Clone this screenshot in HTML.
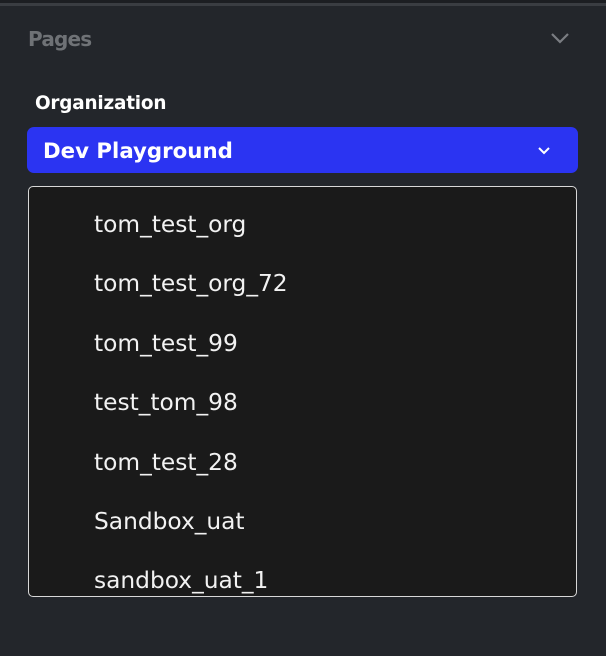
<!DOCTYPE html>
<html><head><style>
html,body{margin:0;padding:0;}
body{width:606px;height:656px;background:#23262b;position:relative;overflow:hidden;font-family:"DejaVu Sans","Liberation Sans",sans-serif;}
.topbar{position:absolute;left:0;top:0;width:606px;height:3px;background:#1c1e22;}
.topline{position:absolute;left:0;top:3px;width:606px;height:3px;background:#3a3d42;}
.pages{position:absolute;left:28px;top:27px;font-size:20px;font-weight:bold;color:#6f7276;letter-spacing:-0.8px;}
.org{position:absolute;left:35px;top:93px;font-size:18.4px;font-weight:bold;color:#fff;letter-spacing:-0.2px;}
.btn{position:absolute;left:27px;top:127px;width:551px;height:46px;background:#2b34f2;border-radius:7px;}
.btn span{position:absolute;left:16px;top:12px;font-size:21.3px;font-weight:bold;color:#fff;}
.list{position:absolute;left:28px;top:186px;width:547px;height:409px;background:#1a1a1a;border:1px solid #d8d8d8;border-radius:5px;overflow:hidden;}
.item{position:absolute;left:65px;font-size:23.3px;color:#f2f2f2;}
</style></head><body>
<div class="topbar"></div><div class="topline"></div>
<div class="pages">Pages</div>
<svg style="position:absolute;left:550px;top:31px" width="20" height="14"><path d="M2 3 L10 11 L18 3" fill="none" stroke="#7a7d82" stroke-width="2.2"/></svg>
<div class="org">Organization</div>
<div class="btn"><span>Dev Playground</span>
<svg style="position:absolute;left:510px;top:19px" width="14" height="10"><path d="M2 2 L7 7 L12 2" fill="none" stroke="#fff" stroke-width="2"/></svg></div>
<div class="list">
<div class="item" style="top:24px">tom_test_org</div>
<div class="item" style="top:83px">tom_test_org_72</div>
<div class="item" style="top:143px">tom_test_99</div>
<div class="item" style="top:202px">test_tom_98</div>
<div class="item" style="top:262px">tom_test_28</div>
<div class="item" style="top:321px">Sandbox_uat</div>
<div class="item" style="top:380px">sandbox_uat_1</div>
</div>
</body></html>
